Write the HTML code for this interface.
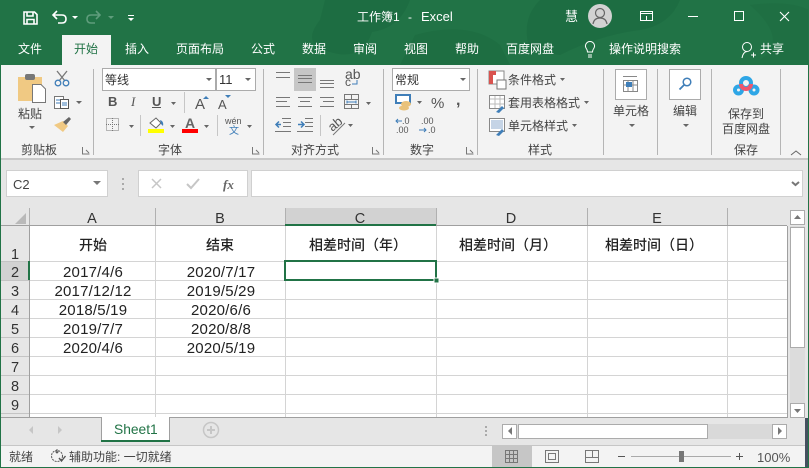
<!DOCTYPE html>
<html lang="zh"><head><meta charset="utf-8"><title>工作簿1 - Excel</title>
<style>
html,body{margin:0;padding:0;width:809px;height:468px;overflow:hidden;background:#e6e6e6}
svg{display:block;position:absolute;left:0;top:0}
text{font-family:"Liberation Sans","Noto Sans CJK SC",sans-serif;font-size:12px;fill:#444}
.w{fill:#fff}.c{text-anchor:middle}
.d{fill:#222;font-size:15px;letter-spacing:.2px}
.h{fill:#222;font-size:14px;font-weight:500}
.r{fill:#333;font-size:14.5px;text-anchor:middle}
.ln{stroke:#777;stroke-width:1;fill:none;shape-rendering:crispEdges}
.a{fill:#666}
</style></head><body>
<svg width="809" height="468" viewBox="0 0 809 468" xmlns="http://www.w3.org/2000/svg">
<!-- title bar -->
<rect width="809" height="65" fill="#217346"/>
<path d="M325 0H410Q400 28 372 32Q362 62 330 52Q300 45 320 20Z" fill="#1d6b40" opacity=".7"/>
<path d="M415 35Q470 20 500 45L510 65H400Z" fill="#1d6b40" opacity=".6"/>
<path d="M540 0H680Q670 25 640 30Q600 35 560 55L530 50Q520 20 540 0Z" fill="#1d6b40" opacity=".7"/>
<path d="M750 5Q790 0 809 10V60H760Q790 40 750 5Z" fill="#1d6b40" opacity=".5"/>
<rect x="0" width="1" height="468" fill="#217346"/>
<!-- QAT -->
<g fill="none" stroke="#fff" stroke-width="1.6">
<path d="M24 12H34.500L37 14.500V24H24Z"/><path d="M27 12V16H33V12M27 24V19.500H34V24"/>
<path d="M54 15H62Q66 15 66 19T62 23H58M57 11L53 15L57 19"/>
<path d="M99 15H91Q87 15 87 19T91 23H95M96 11L100 15L96 19" stroke="#5f9d7c"/>
</g>
<path d="M72 16h6l-3 3z" fill="#fff"/><path d="M108 16h6l-3 3z" fill="#5f9d7c"/>
<path d="M128 15h6v1h-6zM128 18h6l-3 3z" fill="#fff"/>
<text class="w" x="357" y="21">工作簿1</text><text class="w" x="408" y="21">-</text><text class="w" x="421" y="21" style="font-size:13px">Excel</text>
<text class="w" x="565" y="21" style="font-size:13px">慧</text>
<circle cx="600" cy="16" r="12" fill="#d2d2d2"/>
<circle cx="600" cy="13" r="4.500" fill="none" stroke="#666" stroke-width="1.200"/><path d="M593 24Q594 18 600 18T607 24" fill="none" stroke="#666" stroke-width="1.200"/>
<g fill="none" stroke="#fff" stroke-width="1" shape-rendering="crispEdges">
<rect x="640.500" y="11.500" width="12" height="9"/><path d="M641 13.500H652M646.500 20V16"/>
<path d="M688 16.500H698"/><rect x="734.500" y="11.500" width="9" height="9"/>
</g>
<path d="M780 12L789 21M789 12L780 21" stroke="#fff" stroke-width="1.100"/>
<!-- tabs -->
<rect x="62" y="35" width="49" height="30" fill="#f3f3f3"/>
<g class="w"><text class="w" x="18" y="53">文件</text><text x="74" y="53" style="fill:#217346">开始</text><text class="w" x="125" y="53">插入</text><text class="w" x="176" y="53">页面布局</text><text class="w" x="251" y="53">公式</text><text class="w" x="302" y="53">数据</text><text class="w" x="353" y="53">审阅</text><text class="w" x="404" y="53">视图</text><text class="w" x="455" y="53">帮助</text><text class="w" x="506" y="53">百度网盘</text><text class="w" x="609" y="53">操作说明搜索</text><text class="w" x="760" y="53">共享</text></g>
<path d="M586 48a4.500 4.500 0 1 1 8 0q-1.500 2-1.500 4h-5q0-2-1.500-4zM588 55h4M588 57h4" fill="none" stroke="#fff"/>
<circle cx="747" cy="47" r="4.500" fill="none" stroke="#fff"/><path d="M742 58q1-6 5-6.500M751 55h5M753.500 52.500v5" fill="none" stroke="#fff"/>
<!-- ribbon -->
<rect x="1" y="65" width="807" height="93" fill="#f3f3f3"/>
<rect x="1" y="158" width="807" height="2" fill="#c9c9c9"/>
<g fill="#b5b5b5"><rect x="93" y="69" width="1" height="86"/><rect x="263" y="69" width="1" height="86"/><rect x="383" y="69" width="1" height="86"/><rect x="477" y="69" width="1" height="86"/><rect x="603" y="69" width="1" height="86"/><rect x="657" y="69" width="1" height="86"/><rect x="711" y="69" width="1" height="86"/><rect x="780" y="69" width="1" height="86"/></g>
<text x="21" y="154">剪贴板</text><text x="158" y="154">字体</text><text x="291" y="154">对齐方式</text><text x="410" y="154">数字</text><text x="528" y="154">样式</text><text x="734" y="154">保存</text>
<g fill="none" stroke="#777"><path d="M82.500 147v7h7M86 150l3 3"/><path d="M252.500 147v7h7M256 150l3 3"/><path d="M372.500 147v7h7M376 150l3 3"/><path d="M466.500 147v7h7M470 150l3 3"/></g>
<path d="M791 155l5-4 5 4" fill="none" stroke="#666"/>
<!-- clipboard -->
<path d="M18 77h24v24H18z" fill="#f0c983"/><rect x="25" y="74" width="10" height="6" rx="2" fill="#777"/>
<path d="M32.500 84.500H41L45.500 89V102.500H32.500Z" fill="#fff" stroke="#777"/>
<text x="18" y="118">粘贴</text><path class="a" d="M29 126h6l-3 3z"/>
<g fill="none" stroke="#777" stroke-width="1.300"><path d="M57 71l8 10M67 71l-8 10"/></g><circle cx="58" cy="83" r="2.800" fill="none" stroke="#3f7eb8" stroke-width="1.300"/><circle cx="66" cy="83" r="2.800" fill="none" stroke="#3f7eb8" stroke-width="1.300"/>
<path d="M54.500 96.500h9v12h-9z" fill="#fff" stroke="#777"/><path d="M60.500 99.500h8v9h-8z" fill="#fff" stroke="#555"/><path d="M56 100h4M56 103h4M62 103h5M62 105h5" stroke="#3f7eb8"/>
<path class="a" d="M76 101h6l-3 3z"/>
<path d="M54 125l9-4 5 5-5 6z" fill="#f0c983"/><path d="M63 122l6-5 2 2-5 6z" fill="#666"/>
<!-- font -->
<rect x="102.500" y="68.500" width="113" height="22" fill="#fff" stroke="#ababab"/><rect x="216.500" y="68.500" width="39" height="22" fill="#fff" stroke="#ababab"/>
<text x="105" y="84" style="fill:#333">等线</text><text x="219" y="84" style="fill:#333;font-size:13px">11</text>
<path class="a" d="M206 78h6l-3 3zM245 78h6l-3 3z"/>
<text x="108" y="106" style="font-weight:bold;font-size:13px;fill:#555">B</text><text x="131" y="106" style="font-style:italic;font-size:13px;fill:#555;font-family:'Liberation Serif'">I</text><text x="152" y="106" style="font-size:13px;font-weight:bold;fill:#555">U</text><rect x="152" y="107" width="9" height="1" fill="#555"/>
<path class="a" d="M171 102h5l-2.500 3zM129 125h5l-2.500 3zM170 125h5l-2.500 3zM204 125h5l-2.500 3zM247 125h5l-2.500 3z"/>
<rect x="184" y="92" width="1" height="21" fill="#c6c6c6"/><rect x="140" y="115" width="1" height="21" fill="#c6c6c6"/><rect x="217" y="115" width="1" height="21" fill="#c6c6c6"/>
<text x="195" y="109" style="font-size:15px;fill:#555">A</text><path d="M203 99h6l-3-3z" fill="#3f7eb8"/><text x="218" y="109" style="font-size:13px;fill:#555">A</text><path d="M225 95h6l-3 3z" fill="#3f7eb8"/>
<rect x="106.500" y="118.500" width="12" height="12" fill="none" stroke="#777" stroke-dasharray="1 1"/><path d="M112.500 118v13M106 124.500h13" stroke="#777" stroke-dasharray="1 1"/>
<path d="M150 123l6-5 5 5-5 5z" fill="#fff" stroke="#666"/><path d="M160 120q4 1 3 6l-2-2z" fill="#3f7eb8"/><rect x="148" y="129" width="16" height="4" fill="#ff0"/>
<text x="185" y="128" style="font-size:14px;font-weight:bold;fill:#666">A</text><rect x="182" y="129" width="16" height="4" fill="#f00"/>
<text x="225" y="124" style="font-size:9px;fill:#555">wén</text><text x="229" y="134" style="font-size:10px;fill:#3f7eb8">文</text>
<!-- alignment -->
<rect x="294" y="68" width="22" height="23" fill="#c6c6c6"/>
<g class="ln"><path d="M276 72.500h14M276 77.500h14M298 75.500h14M298 78.500h14M298 82.500h14M320 80.500h14M320 83.500h14M320 87.500h14"/>
<path d="M276 97.500h14M276 101.500h11M276 106.500h14M298 97.500h14M300 101.500h10M298 106.500h14M320 97.500h14M323 101.500h11M320 106.500h14"/>
<rect x="344.500" y="94.500" width="14" height="14"/><path d="M344 99.500h14M344 104.500h14M351.500 94v5M351.500 104v5"/>
<path d="M282 118.500h9M283 122.500h8M283 126.500h8M275 131.500h16M305 118.500h8M305 122.500h8M305 126.500h8M297 131.500h16"/></g>
<path d="M347 102h9M347 100.500v3M356 100.500v3" stroke="#3f7eb8" fill="none"/>
<text x="345" y="79" style="font-size:14px;fill:#555">ab</text><text x="345" y="86" style="font-size:12px;fill:#555">c</text><path d="M357 80v4h-5" fill="none" stroke="#3f7eb8"/>
<path d="M281 124.500h-5m3-3l-3 3 3 3M298 124.500h6m-3-3l3 3-3 3" fill="none" stroke="#3f7eb8" stroke-width="1.500"/>
<path class="a" d="M366 102h5l-2.500 3zM348 124h5l-2.500 3z"/>
<rect x="320" y="115" width="1" height="21" fill="#c6c6c6"/>
<text x="328" y="130" transform="rotate(-40 333 125)" style="font-size:13px;fill:#555">ab</text><path d="M333 135l12-12" stroke="#777"/>
<!-- number -->
<rect x="392.500" y="68.500" width="77" height="22" fill="#fff" stroke="#ababab"/><text x="395" y="84" style="fill:#333">常规</text><path class="a" d="M460 78h6l-3 3z"/>
<rect x="396" y="95" width="14" height="8" fill="#fff" stroke="#3f7eb8" stroke-width="2"/><ellipse cx="406" cy="104" rx="5" ry="3" fill="#e9c27a"/><ellipse cx="404" cy="108" rx="5" ry="2.500" fill="#e9c27a"/>
<path class="a" d="M417 101h5l-2.500 3z"/>
<text x="431" y="108" style="font-size:15px;fill:#555">%</text><text x="456" y="105" style="font-size:16px;font-weight:bold;fill:#555">,</text>
<text x="402" y="124" style="font-size:9px;fill:#555">.0</text><text x="396" y="133" style="font-size:9px;fill:#555">.00</text><text x="421" y="124" style="font-size:9px;fill:#555">.00</text><text x="428" y="133" style="font-size:9px;fill:#555">.0</text>
<path d="M402 121h-6m2-2l-2 2 2 2M419 130h7m-2-2l2 2-2 2" fill="none" stroke="#3f7eb8"/>
<!-- styles -->
<rect x="489" y="71" width="15" height="13" fill="#fff" stroke="#888"/><rect x="489" y="71" width="7" height="4" fill="#d9534f"/><rect x="489" y="75" width="4" height="9" fill="#d9534f"/><rect x="497" y="80" width="9" height="9" fill="#fff" stroke="#777"/>
<g fill="#fff" stroke="#888"><rect x="489.500" y="95.500" width="15" height="13"/><rect x="489.500" y="118.500" width="15" height="13"/></g><path d="M490 99h14M495 96v12M500 96v12M490 104h14" stroke="#bbb"/><rect x="491" y="120" width="12" height="9" fill="#c5d4e6"/>
<path d="M496 112l6-6 2 2-5 5zM496 135l6-6 2 2-5 5z" fill="#3f7eb8"/>
<text x="508" y="84">条件格式</text><text x="508" y="107">套用表格格式</text><text x="508" y="130">单元格样式</text>
<path class="a" d="M560 78h5l-2.500 3zM584 101h5l-2.500 3zM572 124h5l-2.500 3z"/>
<!-- cells / edit / save -->
<rect x="615.500" y="69.500" width="31" height="30" fill="#fff" stroke="#ababab"/><rect x="669.500" y="69.500" width="31" height="30" fill="#fff" stroke="#ababab"/>
<g fill="none" stroke="#888"><rect x="623.500" y="80.500" width="14" height="11"/><path d="M623 85h14M628 81v10M633 81v10M623 76.500h14"/></g><rect x="626" y="82" width="6" height="5" fill="#3f7eb8"/>
<circle cx="687" cy="82" r="3.800" fill="none" stroke="#3f7eb8" stroke-width="1.500"/><path d="M684 85l-4.500 4.500" stroke="#3f7eb8" stroke-width="1.800"/>
<text x="613" y="115">单元格</text><text x="673" y="115">编辑</text><path class="a" d="M629 124h6l-3 3zM683 124h6l-3 3z"/>
<g fill="none" stroke-width="4"><circle cx="738.500" cy="90" r="3.500" stroke="#2ea6e6"/><circle cx="754" cy="90" r="3.500" stroke="#2ea6e6"/><circle cx="746" cy="83" r="5" stroke="#2ea6e6"/><path d="M741 84a5 5 0 0 0 10 0" stroke="#f0566d"/></g>
<text x="728" y="118">保存到</text><text x="722" y="133">百度网盘</text>
<!-- formula bar -->
<rect x="1" y="160" width="807" height="48" fill="#e6e6e6"/>
<rect x="6.500" y="170.500" width="101" height="26" fill="#fff" stroke="#d0d0d0"/><text x="13" y="189" style="font-size:13px;fill:#444">C2</text><path d="M93 181h8l-4 4z" fill="#777"/>
<path d="M122 178h2v2h-2zM122 183h2v2h-2zM122 188h2v2h-2z" fill="#aaa"/>
<rect x="138.500" y="170.500" width="109" height="26" fill="#fff" stroke="#d0d0d0"/><rect x="251.500" y="170.500" width="551" height="26" fill="#fff" stroke="#d0d0d0"/>
<path d="M152 179l9 9M161 179l-9 9" stroke="#c6c6c6" stroke-width="1.500"/><path d="M187 184l4 4 8-9" fill="none" stroke="#c6c6c6" stroke-width="2"/>
<text x="223" y="189" style="font-family:'Liberation Serif';font-style:italic;font-size:13px;font-weight:bold;fill:#666">fx</text>
<path d="M792 182l3.500 3 3.500-3" fill="none" stroke="#777" stroke-width="2"/>
<!-- grid -->
<rect x="29" y="226" width="758" height="191" fill="#fff"/>
<rect x="1" y="226" width="28" height="191" fill="#e6e6e6"/>
<rect x="1" y="261" width="28" height="19" fill="#d2d2d2"/><rect x="285" y="208" width="151" height="18" fill="#d2d2d2"/>
<path d="M26 213v11H15z" fill="#b9b9b9"/>
<g fill="#d4d4d4">
<rect x="29" y="261" width="758" height="1"/><rect x="29" y="280" width="758" height="1"/><rect x="29" y="299" width="758" height="1"/><rect x="29" y="318" width="758" height="1"/><rect x="29" y="337" width="758" height="1"/><rect x="29" y="356" width="758" height="1"/><rect x="29" y="375" width="758" height="1"/><rect x="29" y="394" width="758" height="1"/><rect x="29" y="413" width="758" height="1"/>
<rect x="155" y="226" width="1" height="191"/><rect x="285" y="226" width="1" height="191"/><rect x="436" y="226" width="1" height="191"/><rect x="587" y="226" width="1" height="191"/><rect x="727" y="226" width="1" height="191"/>
</g>
<g fill="#c4c4c4"><rect x="1" y="261" width="28" height="1"/><rect x="1" y="280" width="28" height="1"/><rect x="1" y="299" width="28" height="1"/><rect x="1" y="318" width="28" height="1"/><rect x="1" y="337" width="28" height="1"/><rect x="1" y="356" width="28" height="1"/><rect x="1" y="375" width="28" height="1"/><rect x="1" y="394" width="28" height="1"/><rect x="1" y="413" width="28" height="1"/></g>
<g fill="#b0b0b0"><rect x="29" y="208" width="1" height="18"/><rect x="155" y="208" width="1" height="18"/><rect x="285" y="208" width="1" height="18"/><rect x="436" y="208" width="1" height="18"/><rect x="587" y="208" width="1" height="18"/><rect x="727" y="208" width="1" height="18"/></g>
<rect x="1" y="225" width="786" height="1" fill="#9f9f9f"/><rect x="29" y="226" width="1" height="191" fill="#9f9f9f"/><rect x="787" y="226" width="1" height="192" fill="#9f9f9f"/><rect x="1" y="417" width="787" height="1" fill="#9f9f9f"/>
<rect x="285" y="224" width="151" height="2" fill="#217346"/><rect x="28" y="261" width="2" height="19" fill="#217346"/>
<text class="r" x="92" y="223">A</text><text class="r" x="220" y="223">B</text><text class="r" x="360" y="223">C</text><text class="r" x="511" y="223">D</text><text class="r" x="657" y="223">E</text>
<text class="r" x="15" y="259">1</text><text class="r" x="15" y="277">2</text><text class="r" x="15" y="296">3</text><text class="r" x="15" y="315">4</text><text class="r" x="15" y="334">5</text><text class="r" x="15" y="353">6</text><text class="r" x="15" y="372">7</text><text class="r" x="15" y="391">8</text><text class="r" x="15" y="410">9</text>
<text class="h" x="79" y="250">开始</text><text class="h" x="206" y="250">结束</text><text class="h" x="309" y="250">相差时间（年）</text><text class="h" x="459" y="250">相差时间（月）</text><text class="h" x="605" y="250">相差时间（日）</text>
<g text-anchor="middle">
<text class="d" x="93" y="277">2017/4/6</text><text class="d" x="221" y="277">2020/7/17</text>
<text class="d" x="93" y="296">2017/12/12</text><text class="d" x="221" y="296">2019/5/29</text>
<text class="d" x="93" y="315">2018/5/19</text><text class="d" x="221" y="315">2020/6/6</text>
<text class="d" x="93" y="334">2019/7/7</text><text class="d" x="221" y="334">2020/8/8</text>
<text class="d" x="93" y="353">2020/4/6</text><text class="d" x="221" y="353">2020/5/19</text>
</g>
<rect x="285" y="261" width="151" height="19" fill="none" stroke="#217346" stroke-width="2"/>
<rect x="434" y="278" width="5" height="5" fill="#217346" stroke="#fff"/>
<!-- v scrollbar -->
<rect x="790" y="226" width="15" height="177" fill="#dcdcdc"/>
<rect x="790.500" y="227.500" width="14" height="120" fill="#fff" stroke="#ababab"/>
<rect x="790.500" y="210.500" width="14" height="14" fill="#fff" stroke="#ababab"/><path d="M794 219h7l-3.500-4z" fill="#777"/>
<rect x="790.500" y="403.500" width="14" height="14" fill="#fff" stroke="#ababab"/><path d="M794 409h7l-3.500 4z" fill="#777"/>
<!-- sheet tab row -->
<rect x="1" y="418" width="807" height="27" fill="#e6e6e6"/>
<rect x="101" y="417" width="69" height="25" fill="#fff"/><rect x="101" y="417" width="1" height="25" fill="#9f9f9f"/><rect x="169" y="417" width="1" height="25" fill="#9f9f9f"/><rect x="101" y="440" width="69" height="2" fill="#217346"/>
<text x="114" y="434" style="font-size:13.8px;fill:#217346">Sheet1</text>
<path d="M33 426v8l-4-4zM58 426v8l4-4z" fill="#c6c6c6"/>
<circle cx="211" cy="430" r="7.500" fill="none" stroke="#c6c6c6" stroke-width="1.500"/><path d="M207 430h8M211 426v8" stroke="#c6c6c6" stroke-width="2"/>
<path d="M485 426h2v2h-2zM485 430h2v2h-2zM485 434h2v2h-2z" fill="#aaa"/>
<rect x="502" y="424" width="284" height="15" fill="#d9d9d9"/>
<rect x="502.500" y="424.500" width="14" height="14" fill="#fff" stroke="#ababab"/><path d="M512 427v8l-4-4z" fill="#777"/>
<rect x="518.500" y="424.500" width="189" height="14" fill="#fff" stroke="#ababab"/>
<rect x="772.500" y="424.500" width="14" height="14" fill="#fff" stroke="#ababab"/><path d="M778 427v8l4-4z" fill="#777"/>
<!-- status bar -->
<rect x="1" y="445" width="804" height="22" fill="#f3f3f3"/><rect x="1" y="445" width="804" height="1" fill="#c6c6c6"/>
<rect x="0" y="467" width="809" height="1" fill="#217346"/>
<rect x="805" y="418" width="3" height="49" fill="#44505f"/><rect x="808" y="0" width="1" height="468" fill="#217346"/>
<text x="9" y="461">就绪</text><text x="69" y="461">辅助功能: 一切就绪</text>
<circle cx="57" cy="456" r="5.500" fill="none" stroke="#555" stroke-dasharray="2 1"/><path d="M57 449v4m-1.500-1.500l1.500 1.500 1.500-1.500" fill="none" stroke="#555"/><path d="M59 458l2.500 3 4-5" fill="none" stroke="#555" stroke-width="1.400"/>
<rect x="492" y="446" width="40" height="21" fill="#c6c6c6"/>
<g fill="none" stroke="#777" shape-rendering="crispEdges"><rect x="505.500" y="450.500" width="12" height="12"/><path d="M505 454.500h13M505 458.500h13M509.500 450v13M513.500 450v13"/>
<rect x="545.500" y="450.500" width="13" height="12"/><rect x="548.500" y="453.500" width="7" height="6"/>
<rect x="585.500" y="450.500" width="13" height="12"/><path d="M592.500 450v7M585 457.500h14"/></g>
<rect x="618" y="456" width="7" height="1" fill="#555"/><rect x="631" y="456" width="100" height="1" fill="#aaa"/><rect x="679" y="451" width="5" height="11" fill="#777"/><path d="M736 456.500h7M739.500 453v7" stroke="#555" fill="none" shape-rendering="crispEdges"/>
<text x="757" y="462" style="font-size:13px;fill:#555">100%</text>
</svg>
</body></html>
